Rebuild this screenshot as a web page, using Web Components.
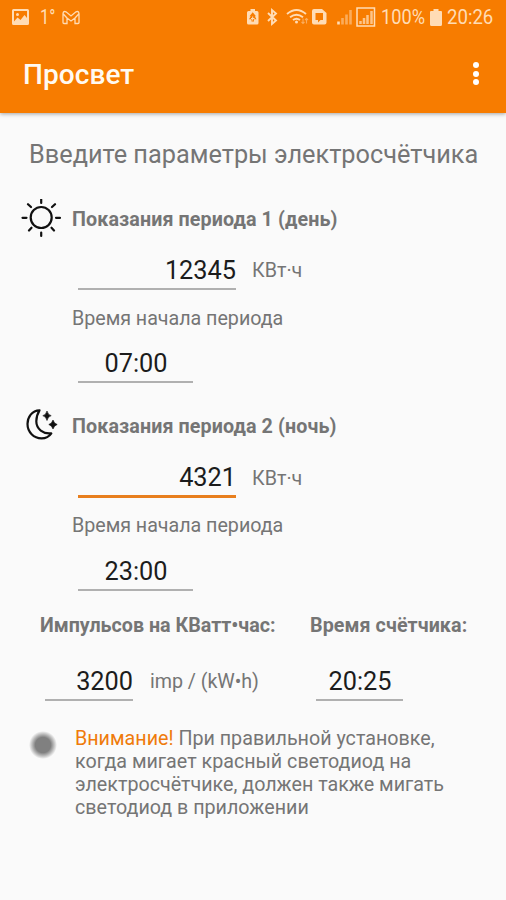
<!DOCTYPE html>
<html lang="ru">
<head>
<meta charset="utf-8">
<title>Просвет</title>
<style>
html,body{margin:0;background:#fafafa}
body{font-family:Roboto,"Liberation Sans",sans-serif;color:#757575}
</style>
</head>
<body>
<meter-app></meter-app>
<script>
const define = (name, html) => {
  const template = document.createElement('template');
  template.innerHTML = html;
  customElements.define(name, class extends HTMLElement {
    constructor() {
      super();
      this.attachShadow({ mode: 'open' }).append(template.content.cloneNode(true));
    }
  });
};

define('status-bar', `
<style>
:host{display:flex;align-items:center;height:34px;box-sizing:border-box;padding:0 12px 0 12px;color:#ffdcb5;font-size:20px;line-height:34px;white-space:nowrap}
svg{display:block;flex:none}
.grow{flex:1}
.num{display:block;transform-origin:0 50%;transform:scaleX(.88)}
</style>
<svg width="17" height="16" viewBox="0 0 17 16"><path fill="currentColor" fill-rule="evenodd" d="M1.500 0h14A1.500 1.500 0 0 1 17 1.500v13a1.500 1.500 0 0 1-1.500 1.500h-14A1.500 1.500 0 0 1 0 14.500v-13A1.500 1.500 0 0 1 1.500 0zM2 12.500l3.500-4 3 2.500L12.500 6 15 9V2H2zM5.500 4a1.500 1.500 0 1 1 0 3 1.500 1.500 0 0 1 0-3z"/></svg>
<span class="num" style="margin-left:11px;width:16px;transform:scaleX(.82)">1°</span>
<svg style="margin-left:6px" width="18" height="15" viewBox="0 0 18 15" fill="none" stroke="currentColor" stroke-width="1.300"><path d="M1 12.500V3.500Q1.500 .7 4 1.800L9 6l5-4.200q2.500-1.100 3 1.700v9q0 1-1 1h-3V8L9 11 5 8v5.500H2q-1 0-1-1zM5 8L1.300 4M13 8l3.700-4"/></svg>
<span class="grow"></span>
<svg width="145" height="24" viewBox="240 5 145 24" style="margin-right:-5px" fill="none" stroke="currentColor">
<path fill="currentColor" stroke="none" fill-rule="evenodd" d="M250.500 9h4.500v2h2q1.500 0 1.500 1.500V23q0 1.500-1.500 1.500h-8.500Q247 24.500 247 23V12.500q0-1.500 1.500-1.500h2zM252.700 12.200l-3.200 4h1.200l-1.700 3h2.500v2.300h2.500v-2.300h2.500l-1.700-3h1.200z"/><path d="M251 18.500h3.500M252.700 16.500v4" stroke-width="1"/>
<path stroke-width="1.900" d="M268 13l8 7.500-4 3.500V10l4 3.500-8 7.500"/>
<path stroke-width="1.900" d="M287 14q9.500-8 19 0M290 17.200q6.500-5 13 0M293 20q3.500-2.600 7 0"/><circle cx="296.500" cy="22" r="1.500" fill="currentColor" stroke="none"/><path stroke-width="1.100" opacity=".5" d="M303 18.500v5m-1.500-1.500 1.500 1.500 1.500-1.500M306.500 23.500v-5m-1.500 1.500 1.500-1.500 1.500 1.500"/>
<path fill="currentColor" stroke="none" fill-rule="evenodd" d="M314 9h8l4.500 4v9.500q0 2-2 2h-10.500q-2 0-2-2V11q0-2 2-2zM315.500 13v7h2.500v2.500l2.500-2.500h2.500v-7z"/>
<g stroke-width="2.600"><path d="M338.500 24.500v-3"/><path opacity=".5" d="M342.500 24.500V18M346.500 24.500v-10M350.500 24.500V10"/></g>
<path stroke-width="1.500" d="M357 8h17.500v18H357z"/><path stroke-width="2.500" opacity=".75" d="M360.500 24v-3M364 24v-6M367.500 24v-9M371.500 24V11"/>
</svg>
<span class="num" style="width:46px;margin-left:1px;margin-right:-1px;transform:scaleX(.91)">100%</span>
<svg style="margin:0 5px 0 4px" width="12" height="17" viewBox="0 0 12 17"><path fill="currentColor" d="M3.500 0h5v2H11q1 0 1 1v12.500q0 1.500-1.500 1.500h-9Q0 17 0 15.500V3q0-1 1-1h2.500z"/></svg>
<span class="num" style="width:47px;transform:scaleX(.93)">20:26</span>
`);

define('app-bar', `
<style>
:host{display:block;background:#f77c00;height:113px;box-shadow:0 1px 4px rgba(0,0,0,.35);color:#fffaf2}
.bar{display:flex;align-items:center;justify-content:space-between;height:79px;padding:0 24px 0 23px}
.title{font-size:28px;font-weight:500;line-height:36px;padding-top:2px;letter-spacing:.08px}
.menu{display:grid;gap:2.300px;margin-right:3px}
i{width:6px;height:6px;border-radius:50%;background:#fff}
</style>
<status-bar></status-bar>
<div class="bar"><span class="title"><slot></slot></span><span class="menu"><i></i><i></i><i></i></span></div>
`);

define('value-field', `
<style>
:host{display:block;box-sizing:border-box;font-size:25.300px;line-height:35px;color:#1c1c1c;border-bottom:2px solid #b0b0b0;white-space:nowrap}
:host([align=end]){text-align:right}
:host([align=center]){text-align:center;line-height:36px;padding-left:1px}
:host([active]){border-bottom:3px solid #e87f1e}
</style>
<slot></slot>
`);

define('meter-period', `
<style>
:host{display:block;height:207.700px;font-size:19.700px}
.label{display:flex;align-items:center;box-sizing:border-box;height:46.400px;padding-top:1px;font-weight:700;line-height:24px;white-space:nowrap;letter-spacing:.1px}
.icon{width:51px;margin:-2px 0 0 21px;height:40px}
.row{display:flex;align-items:flex-end;height:47.600px;padding-left:78px}
.row ::slotted([slot=value]){width:158px}
.unit{margin-left:16px;line-height:38px}
.sub{padding:2.600px 0 1.400px 72px;height:51px;line-height:51px;letter-spacing:-.03px}
.time{padding-left:78px}
.time ::slotted([slot=time]){width:115px;line-height:35px;padding-top:1.200px}
</style>
<div class="label"><span class="icon"><slot name="icon"></slot></span><slot name="label"></slot></div>
<div class="row"><slot name="value"></slot><span class="unit">КВт·ч</span></div>
<div class="sub">Время начала периода</div>
<div class="time"><slot name="time"></slot></div>
`);

define('sun-icon', `
<style>:host,svg{display:block}</style>
<svg width="40" height="40" viewBox="0 0 40 40" fill="none" stroke="#111" stroke-width="2.200" stroke-linecap="round"><circle cx="20.200" cy="18.500" r="10.500"/><path d="M20.200 0.500v3.500M20.200 33.500v3.500M1.500 18.800h4M35 18.800h4M7 5.200l3 2.800M34 5.200l-3 2.800M8 31.500l2.500-2.800M33 31.500l-2.500-2.800"/></svg>
`);

define('moon-icon', `
<style>:host,svg{display:block}</style>
<svg width="40" height="40" viewBox="0 0 40 40" fill="none" stroke="#111" stroke-width="2.200" stroke-linejoin="round"><path d="M18.500 4.300C11 4.500 6.500 11 6.500 18c0 8 6.300 14.300 14 14.300 4.500 0 7.800-2 9.800-5-8 1-15-4.300-15-12 0-4.500 1.200-7.800 3.200-11z"/><path fill="#111" stroke="#111" stroke-width=".6" d="M26 5q1 4 4.200 4.700Q27 10.500 26 14.500q-1-4-4.200-4.800Q25 9 26 5zM32 14q1 3.500 4.200 4.500Q33 19.500 32 23 31 19.500 27.800 18.500 31 17.500 32 14z"/></svg>
`);

define('meter-settings', `
<style>
:host{display:grid;grid-template-columns:265px 1fr;font-size:19.700px}
b{display:block;line-height:24px;padding-top:2.500px;height:37.200px;white-space:nowrap}
.row{display:flex;padding:11px 0 0 5px;align-items:flex-end;height:38.500px}
.unit{line-height:38px;margin-left:17px;white-space:nowrap;letter-spacing:-.05px}
.pulses{padding-left:40px}.clock{padding-left:45px}
.clock b{letter-spacing:.08px}
.pulses value-field{width:88px}
.clock .row{padding-left:6px}
.clock value-field{width:87px;line-height:35px}
</style>
<div class="pulses"><b>Импульсов на КВатт•час:</b><div class="row"><value-field align="end">3200</value-field><span class="unit">imp / (kW•h)</span></div></div>
<div class="clock"><b>Время счётчика:</b><div class="row"><value-field align="center">20:25</value-field></div></div>
`);

define('led-note', `
<style>
:host{display:flex;font-size:19.700px;line-height:23.100px;padding:26.200px 0 0 29px}
i{flex:none;width:28px;height:28px;margin:4px 18px 0 0;border-radius:50%;background:radial-gradient(closest-side,#808080 0 55%,rgba(128,128,128,.5) 78%,rgba(128,128,128,0) 100%)}
p{margin:0;white-space:nowrap}
em{font-style:normal;color:#ef7b0b}
</style>
<i></i><p><em>Внимание!</em> При правильной установке,<br>когда мигает красный светодиод на<br>электросчётчике, должен также мигать<br>светодиод в приложении</p>
`);

define('meter-app', `
<style>
:host{display:block;height:900px;overflow:hidden;background:#fafafa}
h1{margin:0;font-size:25.300px;font-weight:400;height:83px;line-height:84px;padding-left:29px;white-space:nowrap}
</style>
<app-bar>Просвет</app-bar>
<h1>Введите параметры электросчётчика</h1>
<meter-period>
<sun-icon slot="icon"></sun-icon><span slot="label">Показания периода 1 (день)</span>
<value-field slot="value" align="end">12345</value-field><value-field slot="time" align="center">07:00</value-field>
</meter-period>
<meter-period>
<moon-icon slot="icon"></moon-icon><span slot="label">Показания периода 2 (ночь)</span>
<value-field slot="value" align="end" active>4321</value-field><value-field slot="time" align="center">23:00</value-field>
</meter-period>
<meter-settings></meter-settings>
<led-note></led-note>
`);
</script>
</body>
</html>
